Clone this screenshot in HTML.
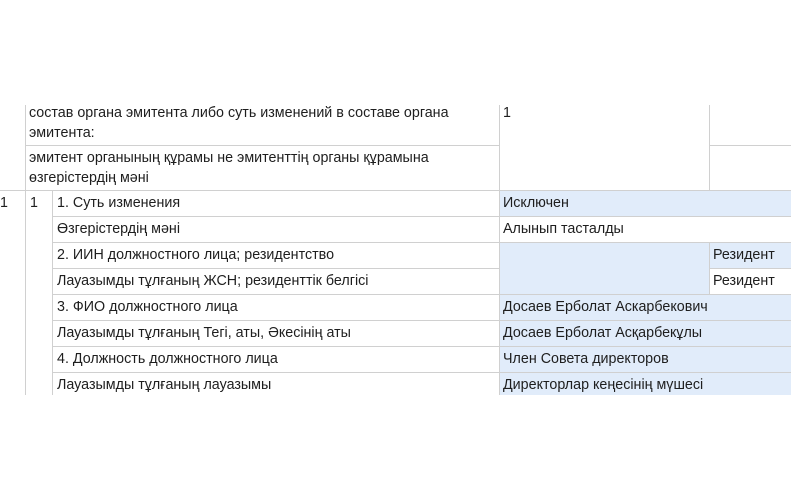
<!DOCTYPE html><html><head><meta charset="utf-8"><style>
body{margin:0;width:800px;height:500px;background:#fff;position:relative;overflow:hidden;font-family:"Liberation Sans",Arial,sans-serif;font-size:14.3px;color:#1e1e1e}
.b{position:absolute;background:#e1ecfa}
.h{position:absolute;height:1px;background:#d0d0d0}
.v{position:absolute;width:1px;background:#d0d0d0}
.t{position:absolute;line-height:20px;white-space:nowrap}
</style></head><body>
<div class="b" style="left:499px;top:190px;width:292px;height:26px"></div>
<div class="b" style="left:499px;top:242px;width:210px;height:52px"></div>
<div class="b" style="left:709px;top:242px;width:82px;height:26px"></div>
<div class="b" style="left:499px;top:294px;width:292px;height:101px"></div>

<div class="h" style="left:25px;top:145px;width:474px"></div>
<div class="h" style="left:709px;top:145px;width:82px"></div>
<div class="h" style="left:0;top:190px;width:791px"></div>
<div class="h" style="left:52px;top:216px;width:739px"></div>
<div class="h" style="left:52px;top:242px;width:739px"></div>
<div class="h" style="left:52px;top:268px;width:447px"></div>
<div class="h" style="left:709px;top:268px;width:82px"></div>
<div class="h" style="left:52px;top:294px;width:739px"></div>
<div class="h" style="left:52px;top:320px;width:739px"></div>
<div class="h" style="left:52px;top:346px;width:739px"></div>
<div class="h" style="left:52px;top:372px;width:739px"></div>

<div class="v" style="left:25px;top:105px;height:290px"></div>
<div class="v" style="left:52px;top:190px;height:205px"></div>
<div class="v" style="left:499px;top:105px;height:290px"></div>
<div class="v" style="left:709px;top:105px;height:85px"></div>
<div class="v" style="left:709px;top:242px;height:52px"></div>

<div class="t" style="left:29px;top:103px">состав органа эмитента либо суть изменений в составе органа<br>эмитента:</div>
<div class="t" style="left:29px;top:148px">эмитент органының құрамы не эмитенттің органы құрамына<br>өзгерістердің мәні</div>
<div class="t" style="left:503px;top:103px">1</div>
<div class="t" style="left:0;top:193px">1</div>
<div class="t" style="left:30px;top:193px">1</div>
<div class="t" style="left:57px;top:193px">1. Суть изменения</div>
<div class="t" style="left:57px;top:219px">Өзгерістердің мәні</div>
<div class="t" style="left:57px;top:245px">2. ИИН должностного лица; резидентство</div>
<div class="t" style="left:57px;top:271px">Лауазымды тұлғаның ЖСН; резиденттік белгісі</div>
<div class="t" style="left:57px;top:297px">3. ФИО должностного лица</div>
<div class="t" style="left:57px;top:323px">Лауазымды тұлғаның Тегі, аты, Әкесінің аты</div>
<div class="t" style="left:57px;top:349px">4. Должность должностного лица</div>
<div class="t" style="left:57px;top:375px">Лауазымды тұлғаның лауазымы</div>
<div class="t" style="left:503px;top:193px">Исключен</div>
<div class="t" style="left:503px;top:219px">Алынып тасталды</div>
<div class="t" style="left:713px;top:245px">Резидент</div>
<div class="t" style="left:713px;top:271px">Резидент</div>
<div class="t" style="left:503px;top:297px">Досаев Ерболат Аскарбекович</div>
<div class="t" style="left:503px;top:323px">Досаев Ерболат Асқарбекұлы</div>
<div class="t" style="left:503px;top:349px">Член Совета директоров</div>
<div class="t" style="left:503px;top:375px">Директорлар кеңесінің мүшесі</div>
</body></html>
